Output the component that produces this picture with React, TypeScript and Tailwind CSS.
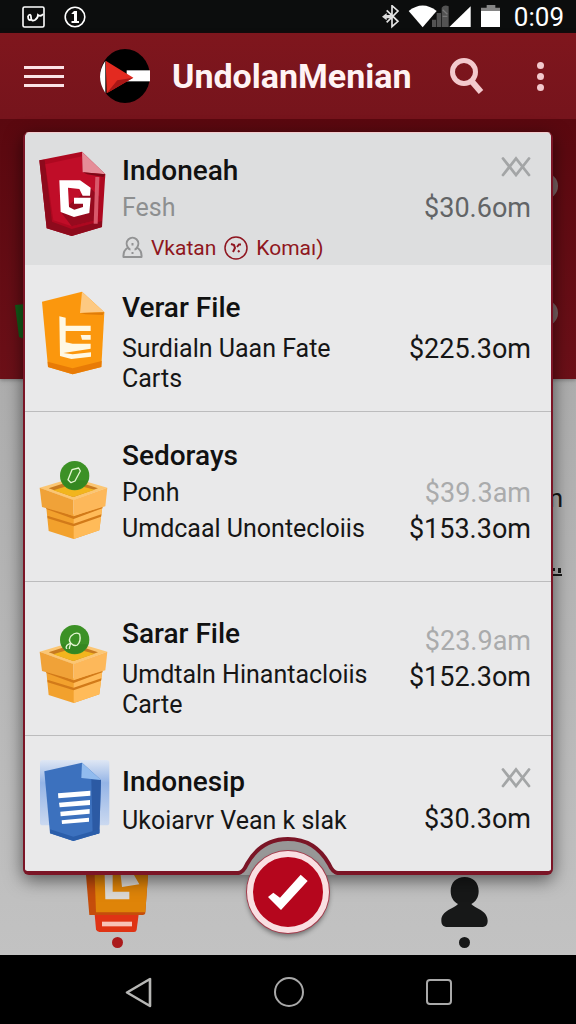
import React from "react";

type Shape = { className?: string };

function RedFile({ className }: Shape) {
  return (
    <svg className={className} viewBox="114 78 216 264" aria-hidden="true">
      <path d="M118 106 246 80 316 148 306 306 215 333 140 310Z" fill="#ae0820" />
      <path d="M118 106 134 104 156 290 215 312 306 288 306 306 215 333 140 310Z" fill="#8d0a1c" />
      <path d="M136 118 246 94 248 142 302 150 294 284 215 304 160 286Z" fill="#c00d28" />
      <path d="M270 188 298 215 294 284 215 304 182 260Z" fill="#960a1e" />
      <path d="M246 80 316 148 248 142Z" fill="#e58d98" />
      <path d="M248 142 316 148 310 156 262 148Z" fill="#7d0716" />
      <path d="M286 156h12l-5 140h-12Z" fill="#d9586a" />
      <path d="M178 166h62l32 22-2 24h-22l-10-20-34-4 3 58 16 8 26-8v-10h-27v-18h50l-4 46-46 12-40-15Z" fill="#fff" />
    </svg>
  );
}

function OrangeFile({ className }: Shape) {
  return (
    <svg className={className} viewBox="114 54 216 264" aria-hidden="true">
      <path d="M126 92 246 62 313 124 304 288 218 310 144 288Z" fill="#fb970d" />
      <path d="M143 272 218 292 305 270 304 288 218 310 144 288Z" fill="#e87b06" />
      <path d="M246 62 313 124 240 126Z" fill="#fdc982" />
      <path d="M240 126 313 124 308 132 256 130Z" fill="#e07c08" />
      <path d="M178 136 197 140V164H272V180H197V214L218 218H272V233L190 246 218 250 273 244V257L214 264 180 255Z" fill="#fff8e3" />
      <path d="M242 192h30v14h-26Z" fill="#fff8e3" />
    </svg>
  );
}

function Crate({ className, leaf = false }: Shape & { leaf?: boolean }) {
  return (
    <svg className={className} viewBox="114 87 216 264" aria-hidden="true">
      <path d="M119 170 220 140 322 170 220 208Z" fill="#fbc673" />
      <path d="M146 172 220 148 294 172 220 198Z" fill="#c77a20" />
      <path d="M160 178 220 160 284 176 220 198Z" fill="#f2b51d" />
      <path d="M138 220 220 250 308 220 298 298 221 324 146 300Z" fill="#f2a12d" />
      <path d="M221 250 308 220 298 298 221 324Z" fill="#ffbb59" />
      <path d="M138 226 221 256 308 226 307 232 221 264 139 234Z" fill="#d27a19" />
      <path d="M142 254 221 278 304 250 303 257 221 286 143 262Z" fill="#d27a19" />
      <path d="M119 170 220 207V254L126 228Z" fill="#f0a238" />
      <path d="M220 207 322 170 316 226 220 254Z" fill="#fdb85a" />
      <circle cx="224" cy="134" r="44" fill="#3c9126" />
      <path d="M183 148a44 44 0 0 0 82 0Z" fill="#2f801e" opacity=".6" />
      {leaf ? (
        <path d="M212 144q-8-10 2-22 14-13 25-4 5 20-7 32-10 5-20-6Zm0 0-10 6q-6 8-2 10m12-16-4 16" fill="none" stroke="#e4f6d2" strokeWidth="4" strokeLinejoin="round" strokeLinecap="round" />
      ) : (
        <path d="m216 116 20-5 5 9-16 30-12 5-9-9Z" fill="none" stroke="#e4f6d2" strokeWidth="4" strokeLinejoin="round" />
      )}
    </svg>
  );
}

function BlueFile({ className }: Shape) {
  return (
    <svg className={className} viewBox="114 60 216 264" aria-hidden="true">
      <defs>
        <linearGradient id="halo" x1="0" y1="0" x2="0" y2="1">
          <stop offset="0" stopColor="#dfe7f4" />
          <stop offset=".35" stopColor="#94b4e6" />
          <stop offset="1" stopColor="#cbd9f0" />
        </linearGradient>
      </defs>
      <rect x="120" y="60" width="208" height="196" rx="8" fill="url(#halo)" />
      <path d="M133 94 246 68 303 120 298 280 220 303 150 280Z" fill="#3c71be" />
      <path d="M274 118 303 120 298 280 278 286Z" fill="#2c5aa4" />
      <path d="M150 268 220 290 298 268V280L220 303 150 280Z" fill="#2b5eaa" />
      <path d="M246 68 303 120 244 114Z" fill="#91bbee" />
      <path d="m174 160 97-8v15l-96 8Zm3 28 93-8v15l-91 7Zm4 27 88-8v14l-87 8Zm4 26 82-8v12l-81 7Z" fill="#fff" />
    </svg>
  );
}

function DoubleCross() {
  return (
    <svg className="h-7 w-[30px]" viewBox="0 0 30 28" fill="none" stroke="#a3a5a6" strokeWidth="2.8" strokeLinecap="round" aria-hidden="true">
      <path d="M2 5.500 15 22 28 5.500M2 22 15 5.500 28 22" />
    </svg>
  );
}

type Price = { text: string; tone: string };
type Item = {
  title: string;
  lines: string[];
  lineTone: string;
  icon: React.ReactNode;
  crossed?: boolean;
  prices: Price[];
  row: string;
  body: string;
  side: string;
  meta?: boolean;
};

const dark = "text-[#161616]";
const faded = "text-[#aaabac]";

const items: Item[] = [
  {
    title: "Indoneah",
    lines: ["Fesh"],
    lineTone: "text-[#8d8f90]",
    icon: <RedFile className="-mt-0.5 h-[88px] w-[72px]" />,
    crossed: true,
    prices: [{ text: "$30.6om", tone: "text-[#626466]" }],
    row: "bg-[#dddedf] pt-5 pb-0.5",
    body: "pt-1",
    side: "gap-3",
    meta: true,
  },
  {
    title: "Verar File",
    lines: ["Surdialn Uaan Fate", "Carts"],
    lineTone: dark,
    icon: <OrangeFile className="-mt-px h-[88px] w-[72px]" />,
    prices: [{ text: "$225.3om", tone: dark }],
    row: "border-b border-[#bcbcbd] pt-[25px] pb-[17px]",
    body: "pt-2",
    side: "pt-11",
  },
  {
    title: "Sedorays",
    lines: ["Ponh", "Umdcaal Unontecloiis"],
    lineTone: dark,
    icon: <Crate className="mt-[22px] h-[88px] w-[72px]" />,
    prices: [
      { text: "$39.3am", tone: faded },
      { text: "$153.3om", tone: dark },
    ],
    row: "border-b border-[#bcbcbd] pt-[26px] pb-[33px]",
    body: "gap-1.5 pt-1",
    side: "gap-1.5 pt-10",
  },
  {
    title: "Sarar File",
    lines: ["Umdtaln Hinantacloiis", "Carte"],
    lineTone: dark,
    icon: <Crate leaf className="mt-2 h-[88px] w-[72px]" />,
    prices: [
      { text: "$23.9am", tone: faded },
      { text: "$152.3om", tone: dark },
    ],
    row: "border-b border-[#bcbcbd] pt-[34px] pb-[15px]",
    body: "pt-2",
    side: "gap-1.5 pt-2.5",
  },
  {
    title: "Indonesip",
    lines: ["Ukoiarvr Vean k slak"],
    lineTone: dark,
    icon: <BlueFile className="-mt-1 h-[88px] w-[72px]" />,
    crossed: true,
    prices: [{ text: "$30.3om", tone: dark }],
    row: "pt-7 pb-[23px]",
    body: "pt-1.5",
    side: "gap-3",
  },
];

function Row({ item }: { item: Item }) {
  return (
    <li className={`flex gap-3 pr-5 pl-[13px] ${item.row}`}>
      <div className="shrink-0">{item.icon}</div>
      <div className="min-w-0 flex-1 whitespace-nowrap">
        <h2 className="text-[28px] leading-9 font-medium text-[#111]">{item.title}</h2>
        <div className={`flex flex-col ${item.body}`}>
          {item.lines.map((line) => (
            <p key={line} className={`text-[25px] leading-[30px] ${item.lineTone}`}>{line}</p>
          ))}
        </div>
        {item.meta && (
          <div className="flex items-center gap-2 pt-2.5 text-[21px] leading-[30px] text-[#8f1620]">
            <svg className="h-[24px] w-[21px]" viewBox="0 0 21 24" fill="none" stroke="#929394" strokeWidth="2" aria-hidden="true">
              <path d="M6 11.500a5.800 6 0 1 1 9 0q5 3 4.500 9.500h-18q-.5-6.500 4.500-9.500Z" strokeLinejoin="round" />
              <path d="M6 11.500q1 2 2.500 2M15 11.500q-1 2-2.500 2M10.500 7v2.500M10.500 16v2" />
            </svg>
            <span>Vkatan</span>
            <svg className="size-6" viewBox="0 0 24 24" fill="none" stroke="#8f1620" strokeWidth="1.500" aria-hidden="true">
              <circle cx="12" cy="12" r="11" />
              <path d="m7 8 3 1 1 3-2 4M13 11l2-2.500h2M14 14.500l1.500 1.500" strokeWidth="2" />
            </svg>
            <span>Komaı)</span>
          </div>
        )}
      </div>
      <div className={`flex shrink-0 flex-col items-end ${item.side}`}>
        {item.crossed && <DoubleCross />}
        {item.prices.map((price) => (
          <p key={price.text} className={`text-[27px] leading-[30px] ${price.tone}`}>{price.text}</p>
        ))}
      </div>
    </li>
  );
}

function StatusBar() {
  return (
    <div className="flex h-[33px] items-center bg-[#0c0d0d] pr-3 pl-[22px] text-white">
      <svg className="h-[22px] w-[23px]" viewBox="0 0 23 22" fill="none" stroke="currentColor" aria-hidden="true">
        <rect x="1" y="1" width="21" height="20" rx="1.500" strokeWidth="1.600" />
        <path d="M6 10q3-3 3 1 0 5 4 3 3-2 3-5 3 2 5-1M6 10q0 6 4 3" strokeWidth="1.800" />
      </svg>
      <svg className="ml-[19px] size-[22px]" viewBox="0 0 22 22" aria-hidden="true">
        <circle cx="11" cy="11" r="9.800" fill="none" stroke="currentColor" strokeWidth="1.600" />
        <path d="M7.500 7.500 10 5h3v10h2v2H7.500v-2H10V8H7.500Z" fill="currentColor" />
      </svg>
      <svg className="ml-auto h-6 w-[120px]" viewBox="288 10 360 72" fill="#fff" aria-hidden="true">
        <path d="m302 26 34 33-18 16V12l18 16-34 34" fill="none" stroke="#e5e5e5" strokeWidth="5" />
        <path d="m288 45 14-11v6h15v10h-15v6Z" fill="#ddd" />
        <path d="M368 28q42-33 84 0l-42 49Z" />
        <path d="M438 54h12v22h-12Zm14-20h13v42h-13Zm15-16q8-10 21-4v62h-21Z" fill="#535353" />
        <path d="m470 24 14 14m-14 6h14" stroke="#777" strokeWidth="4" />
        <path d="m490 76 64-62v62Z" />
        <path d="M602 10h26v8h14v14h-57V18h17Z" fill="#858585" />
        <path d="M585 28h57v48h-57Z" />
      </svg>
      <span className="pl-3 text-[26px] leading-none">0:09</span>
    </div>
  );
}

function Header() {
  return (
    <header className="relative flex h-[86px] items-center bg-linear-to-b from-[#7f161d] to-[#76141c] pr-[26px] pl-6 shadow-[0_2px_5px_#3a050a]">
      <button type="button" aria-label="Menu" className="flex w-10 flex-col gap-1.5">
        <span className="h-[3px] w-full bg-[#fbe3e6]" />
        <span className="h-[3px] w-full bg-[#fbe3e6]" />
        <span className="h-[3px] w-full bg-[#fbe3e6]" />
      </button>
      <svg className="ml-9 h-[54px] w-[50px] shrink-0" viewBox="300 146 150 162" aria-hidden="true">
        <ellipse cx="375" cy="227" rx="75" ry="81" fill="#000" />
        <path d="M380 210h70v33h-70Z" fill="#fff" />
        <path d="M316 181q-32 48 0 97Z" fill="#fff" />
        <path d="M317 181 400 232 320 279Z" fill="#e32a20" />
        <path d="M400 232 320 279 352 240Z" fill="#a81716" />
      </svg>
      <h1 className="ml-[22px] text-[34px] leading-none font-bold whitespace-nowrap text-[#fff3f4]">UndolanMenian</h1>
      <button type="button" aria-label="Search" className="ml-auto">
        <svg className="h-9 w-[34px]" viewBox="0 0 34 36" fill="none" stroke="#f3c9cd" aria-hidden="true">
          <circle cx="14" cy="14" r="11.500" strokeWidth="5" />
          <path d="m21.500 23 9.500 11" strokeWidth="6" />
        </svg>
      </button>
      <button type="button" aria-label="More options" className="ml-[46px] flex w-[20px] flex-col items-center gap-1">
        <span className="size-[7px] rounded-full bg-[#f3c9cd]" />
        <span className="size-[7px] rounded-full bg-[#f3c9cd]" />
        <span className="size-[7px] rounded-full bg-[#f3c9cd]" />
      </button>
    </header>
  );
}

function Backdrop() {
  return (
    <div className="absolute inset-0 overflow-hidden bg-linear-to-b from-[#a4a4a4] to-[#c2c2c2]" aria-hidden="true">
      <div className="h-[260px] bg-linear-to-b from-[#5a080f] to-[#6c1018] shadow-[0_1px_4px_#777]" />
      <div className="absolute top-[54px] right-[18px] size-[26px] rounded-full bg-[#7e6465]" />
      <div className="absolute top-[181px] right-[18px] size-[26px] rounded-full bg-[#7e6465]" />
      <svg className="absolute top-[184px] left-[15px] h-10 w-5" viewBox="0 0 20 40">
        <path d="M0 2 20 0v40L4 34Z" fill="#125c18" />
      </svg>
      <span className="absolute top-[364px] right-[13px] text-[26px] leading-[30px] text-[#161616]">n</span>
      <svg className="absolute top-[449px] right-[14px] h-[9px] w-3" viewBox="0 0 12 9" fill="#1b1b1b">
        <path d="M0 6h12v2H0ZM2 0h3v3H2Zm6 0h3v5H8Z" />
      </svg>
    </div>
  );
}

export default function App() {
  return (
    <div className="flex min-h-screen flex-col bg-black font-['Roboto',sans-serif]">
      <StatusBar />
      <Header />
      <main className="relative flex flex-1 flex-col">
        <Backdrop />
        <section className="relative z-10 mx-[23px] mt-[13px] rounded-md border-x-2 border-t border-b-4 border-x-[#7b1526] border-t-[#f4cdd0] border-b-[#7b1526] bg-[#e9e9ea] shadow-[0_5px_18px_rgba(0,0,0,0.55)]">
          <ul className="overflow-hidden rounded-t">
            {items.map((item) => (
              <Row key={item.title} item={item} />
            ))}
          </ul>
          <svg className="absolute -bottom-1 left-1/2 h-[38px] w-[100px] -translate-x-1/2" viewBox="0 0 100 38" aria-hidden="true">
            <path d="M0 38Q6 37 10 28 24 2 50 2T90 28Q94 37 100 38Z" fill="#979797" />
            <path d="M0 36Q5 36 9 27 23 2 50 2T91 27Q95 36 100 36" fill="none" stroke="#7b1526" strokeWidth="4" />
          </svg>
        </section>
        <nav className="relative flex h-20 justify-between pr-[88px] pl-[86px]">
          <button type="button" aria-label="Files" className="flex w-[62px] flex-col items-center gap-1">
            <svg className="h-[58px] w-[62px]" viewBox="258 402 186 174" aria-hidden="true">
              <path d="M284 520h132l-6 46q-1 7-8 7H298q-8 0-10-8Z" fill="#df3314" />
              <path d="M306 542h90v14h-90Z" fill="#f8c3b7" />
              <path d="M258 402H444L436 514q0 8-8 8H268Z" fill="#c54d0b" />
              <path d="M284 402H444L436 514H288Z" fill="#df8408" />
              <path d="M314 402h24v50h50v23h-72Zm48 0h40l16 28-52 8Z" fill="#dcd9d5" />
            </svg>
            <span className="size-[11px] rounded-full bg-[#ab1a1c]" />
          </button>
          <button type="button" aria-label="Profile" className="flex w-12 flex-col items-center gap-2">
            <svg className="h-[54px] w-12" viewBox="660 162 144 162" fill="#171818" aria-hidden="true">
              <path d="M734 168c-25 0-42 16-42 42 0 18 8 32 22 39-10 14-50 18-50 50 0 14 8 19 20 19h100c12 0 19-5 19-19 0-31-39-37-49-50 14-7 22-21 22-39 0-26-17-42-42-42Z" />
            </svg>
            <span className="size-[11px] rounded-full bg-[#171818]" />
          </button>
        </nav>
        <button
          type="button"
          aria-label="Confirm"
          className="absolute bottom-[22px] left-1/2 z-20 flex size-[82px] -translate-x-1/2 items-center justify-center rounded-full border-[6px] border-[#f9dfe2] bg-[#b5061d] shadow-[0_0_0_1px_#a5394a,0_3px_5px_rgba(0,0,0,0.45)]"
        >
          <svg className="h-9 w-10" viewBox="143 160 120 108" fill="#fff" aria-hidden="true">
            <path d="m143 229 16-13 20 15 62-69 21 19-80 87Z" />
          </svg>
        </button>
      </main>
      <footer className="flex h-[70px] items-center justify-between bg-black px-[124px] pt-1">
        <button type="button" aria-label="Back">
          <svg className="h-8 w-7" viewBox="0 0 28 32" fill="none" stroke="#b7b7b5" strokeWidth="2.600" strokeLinejoin="round" aria-hidden="true">
            <path d="M26 3v27L3 16.500Z" />
          </svg>
        </button>
        <button type="button" aria-label="Home" className="size-[30px] rounded-full border-2 border-[#a9a9a9]" />
        <button type="button" aria-label="Recent apps" className="size-[26px] rounded-sm border-2 border-[#a9a9a9]" />
      </footer>
    </div>
  );
}
